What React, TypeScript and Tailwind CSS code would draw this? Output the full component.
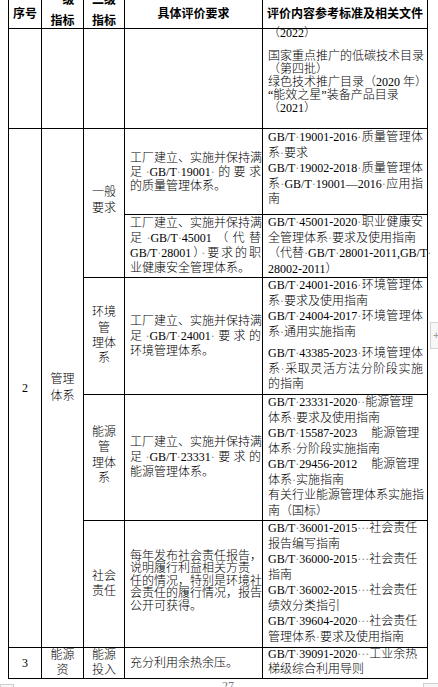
import clsx from "clsx"
import type { ReactNode } from "react"

// Word-style space marks shown as light dots
const dots = (s: string): ReactNode[] =>
  s.split("·").flatMap((p, i) =>
    i === 0 ? [p] : [<span key={i} className="text-[#8c8c8c]">·</span>, p]
  )

function Ln({ t, j, className }: { t: string; j?: boolean; className?: string }) {
  return (
    <div className={clsx("whitespace-nowrap", j && "text-justify [text-align-last:justify]", className)}>
      {dots(t)}
    </div>
  )
}

const cell = "border border-black p-0"

function Stack({ lines, className }: { lines: string[]; className?: string }) {
  return (
    <div className={clsx("flex flex-col items-center", className)}>
      {lines.map((l) => (
        <div key={l} className="whitespace-nowrap">{l}</div>
      ))}
    </div>
  )
}

export default function App() {
  return (
    <div className="relative w-[438px] h-[687px] overflow-hidden bg-white text-black text-[12px] font-light font-['Liberation_Serif','Noto_Sans_CJK_SC',serif]">
      <table className="table-fixed border-collapse ml-[8px] -mt-[12px] w-[420px]">
        <colgroup>
          <col className="w-[33px]" />
          <col className="w-[42px]" />
          <col className="w-[41px]" />
          <col className="w-[138px]" />
          <col className="w-[165px]" />
        </colgroup>
        <tbody>
          {/* header */}
          <tr className="h-[40px] font-bold font-['Noto_Sans_CJK_SC',sans-serif]">
            <td className={clsx(cell, "align-bottom text-center pb-[8px] leading-[14px]")}>序号</td>
            <td className={clsx(cell, "align-bottom text-center leading-[14px]")}>
              <div className="flex flex-col items-center gap-[7px] pb-[1px]">
                <div>一级</div>
                <div>指标</div>
              </div>
            </td>
            <td className={clsx(cell, "align-bottom text-center leading-[14px]")}>
              <div className="flex flex-col items-center gap-[7px] pb-[1px]">
                <div>二级</div>
                <div>指标</div>
              </div>
            </td>
            <td className={clsx(cell, "align-bottom text-center pb-[8px] leading-[14px]")}>具体评价要求</td>
            <td className={clsx(cell, "align-bottom text-center pb-[8px] leading-[14px]")}>评价内容参考标准及相关文件</td>
          </tr>

          {/* continuation of previous item */}
          <tr className="h-[100px]">
            <td className={cell} />
            <td className={cell} />
            <td className={cell} />
            <td className={cell} />
            <td className={clsx(cell, "align-top pl-[5px] pr-[4px]")}>
              <div className="-mt-[2px] leading-[12px]">（2022）</div>
              <div className="mt-[11px] leading-[13px]">
                <Ln t="国家重点推广的低碳技术目录" />
                <Ln t="（第四批）" />
                <Ln t="绿色技术推广目录（2020 年）" />
                <Ln t="“能效之星”装备产品目录" />
                <Ln t="（2021）" />
              </div>
            </td>
          </tr>

          {/* 2 管理体系 — 一般要求 (1) */}
          <tr className="h-[86px]">
            <td rowSpan={5} className={clsx(cell, "align-middle text-center")}>2</td>
            <td rowSpan={5} className={clsx(cell, "align-middle text-center leading-[17px]")}>
              <Stack lines={["管理", "体系"]} />
            </td>
            <td rowSpan={2} className={clsx(cell, "align-middle text-center leading-[16px]")}>
              <Stack lines={["一般", "要求"]} className="pb-[6px]" />
            </td>
            <td className={clsx(cell, "align-middle pl-[5px] pr-[1px] leading-[14px]")}>
              <Ln t="工厂建立、实施并保持满" j />
              <Ln t="足·GB/T·19001·的要求" j />
              <Ln t="的质量管理体系。" />
            </td>
            <td className={clsx(cell, "align-top pl-[5px] pr-[4px] pt-[1px] leading-[15.5px]")}>
              <Ln t="GB/T·19001-2016·质量管理体" j />
              <Ln t="系·要求" />
              <Ln t="GB/T·19002-2018·质量管理体" j />
              <Ln t="系·GB/T·19001—2016·应用指" j />
              <Ln t="南" />
            </td>
          </tr>

          {/* 一般要求 (2) */}
          <tr className="h-[63px]">
            <td className={clsx(cell, "align-middle pl-[5px] pr-[1px] leading-[15px]")}>
              <Ln t="工厂建立、实施并保持满" j />
              <Ln t="足·GB/T·45001（代替" j />
              <Ln t="GB/T·28001）·要求的职" j />
              <Ln t="业健康安全管理体系。" />
            </td>
            <td className={clsx(cell, "align-top pl-[5px] pr-[4px] leading-[15.5px]")}>
              <Ln t="GB/T·45001-2020·职业健康安" j />
              <Ln t="全管理体系·要求及使用指南" />
              <Ln t="（代替·GB/T·28001-2011,GB/T·" j />
              <Ln t="28002-2011）" />
            </td>
          </tr>

          {/* 环境管理体系 */}
          <tr className="h-[117px]">
            <td className={clsx(cell, "align-middle text-center leading-[15.3px]")}>
              <Stack lines={["环境", "管", "理体", "系"]} />
            </td>
            <td className={clsx(cell, "align-middle pl-[5px] pr-[1px] leading-[15px]")}>
              <Ln t="工厂建立、实施并保持满" j />
              <Ln t="足·GB/T·24001·要求的" j />
              <Ln t="环境管理体系。" />
            </td>
            <td className={clsx(cell, "align-top pl-[5px] pr-[4px] leading-[15.5px]")}>
              <Ln t="GB/T·24001-2016·环境管理体" j />
              <Ln t="系·要求及使用指南" />
              <Ln t="GB/T·24004-2017·环境管理体" j />
              <Ln t="系·通用实施指南" />
              <Ln t="GB/T·43385-2023·环境管理体" j className="mt-[6px]" />
              <Ln t="系·采取灵活方法分阶段实施" j />
              <Ln t="的指南" />
            </td>
          </tr>

          {/* 能源管理体系 */}
          <tr className="h-[126px]">
            <td className={clsx(cell, "align-middle text-center leading-[15.3px]")}>
              <Stack lines={["能源", "管", "理体", "系"]} className="pb-[4px]" />
            </td>
            <td className={clsx(cell, "align-middle pl-[5px] pr-[1px] leading-[15px]")}>
              <Ln t="工厂建立、实施并保持满" j />
              <Ln t="足·GB/T·23331·要求的" j />
              <Ln t="能源管理体系。" />
            </td>
            <td className={clsx(cell, "align-top pl-[5px] pr-[4px] leading-[15.5px]")}>
              <Ln t="GB/T·23331-2020··能源管理" />
              <Ln t="体系·要求及使用指南" />
              <div className="whitespace-nowrap">
                GB/T<span className="text-[#8c8c8c]">·</span>15587-2023
                <span className="inline-block w-[14px]" />
                能源管理
              </div>
              <Ln t="体系·分阶段实施指南" />
              <div className="whitespace-nowrap">
                GB/T<span className="text-[#8c8c8c]">·</span>29456-2012
                <span className="inline-block w-[14px]" />
                能源管理
              </div>
              <Ln t="体系·实施指南" />
              <Ln t="有关行业能源管理体系实施指" />
              <Ln t="南（国标）" />
            </td>
          </tr>

          {/* 社会责任 */}
          <tr className="h-[127px]">
            <td className={clsx(cell, "align-middle text-center leading-[15px]")}>
              <Stack lines={["社会", "责任"]} />
            </td>
            <td className={clsx(cell, "align-middle pl-[5px] pr-[1px] pb-[6px] leading-[12.5px]")}>
              <Ln t="每年发布社会责任报告，" j />
              <Ln t="说明履行利益相关方责" />
              <Ln t="任的情况，特别是环境社" j />
              <Ln t="会责任的履行情况，报告" j />
              <Ln t="公开可获得。" />
            </td>
            <td className={clsx(cell, "align-top pl-[5px] pr-[4px] leading-[15.5px]")}>
              <Ln t="GB/T·36001-2015···社会责任" />
              <Ln t="报告编写指南" />
              <Ln t="GB/T·36000-2015···社会责任" />
              <Ln t="指南" />
              <Ln t="GB/T·36002-2015···社会责任" />
              <Ln t="绩效分类指引" />
              <Ln t="GB/T·39604-2020···社会责任" />
              <Ln t="管理体系·要求及使用指南" />
            </td>
          </tr>

          {/* 3 能源资源 */}
          <tr className="h-[31px]">
            <td className={clsx(cell, "align-middle text-center")}>3</td>
            <td className={clsx(cell, "align-middle text-center leading-[15px]")}>
              <Stack lines={["能源", "资"]} />
            </td>
            <td className={clsx(cell, "align-middle text-center leading-[15px]")}>
              <Stack lines={["能源", "投入"]} />
            </td>
            <td className={clsx(cell, "align-middle pl-[5px] pr-[1px] leading-[15px]")}>
              <Ln t="充分利用余热余压。" />
            </td>
            <td className={clsx(cell, "align-top pl-[5px] pr-[4px] leading-[15px]")}>
              <Ln t="GB/T·39091-2020···工业余热" className="-mt-[1px]" />
              <Ln t="梯级综合利用导则" />
            </td>
          </tr>
        </tbody>
      </table>

      {/* page number, cut off by the window */}
      <div className="absolute left-[222px] top-[680px] text-[12px] leading-[12px] text-[#777]">27</div>

      {/* viewer chrome */}
      <div className="absolute left-[430px] top-[322px] w-[12px] h-[27px] border border-[#d4d4d4] bg-[#f7f7f7] flex items-center pl-[2px] text-[#9a9a9a] text-[11px] font-['Liberation_Sans',sans-serif]">
        +
      </div>
      <div className="absolute left-0 top-[684px] w-[14px] h-[10px] border border-[#cfcfcf] bg-[#f7f7f7]" />
      <div className="absolute left-[423px] top-[683px] w-[18px] h-[10px] border border-[#cfcfcf] bg-[#f7f7f7]" />
    </div>
  )
}
